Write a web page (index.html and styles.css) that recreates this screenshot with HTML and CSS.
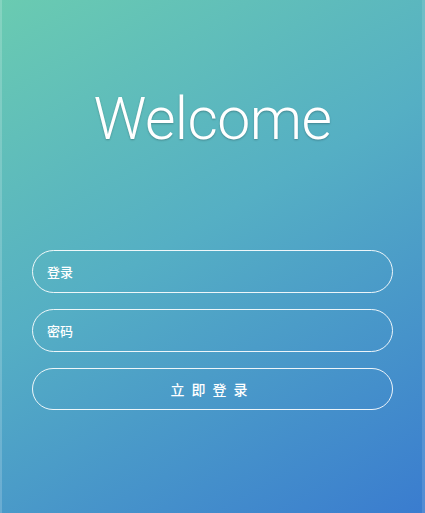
FILE: index.html
```html
<!DOCTYPE html>
<html lang="zh">
<head>
<meta charset="utf-8">
<title>Welcome</title>
<link rel="stylesheet" href="styles.css">
</head>
<body>
<main class="screen">
  <h1 class="title">Welcome</h1>
  <form class="form">
    <label class="field"><input class="input" type="text" placeholder="登录"></label>
    <label class="field"><input class="input" type="password" placeholder="密码"></label>
    <button class="submit" type="button">立即登录</button>
  </form>
</main>
</body>
</html>
```
FILE: styles.css
```css
* { box-sizing: border-box; }
html, body { margin: 0; height: 100%; }
body {
  font-family: "Noto Sans CJK SC", "Noto Sans", sans-serif;
}
.screen {
  height: 513px;
  background: linear-gradient(150deg, #6acbb1 0%, #55afc4 45%, #3a7ccf 100%);
  box-shadow: inset 2px 0 0 rgba(255,255,255,0.18), inset -3px 0 0 rgba(255,255,255,0.12);
  display: flex;
  flex-direction: column;
  align-items: center;
  padding: 84px 32px 0 32px;
}
.title {
  margin: 0;
  font-family: Roboto, "Liberation Sans", sans-serif;
  font-weight: 300;
  font-size: 59px;
  line-height: 70px;
  color: #fff;
  letter-spacing: -0.6px;
  text-shadow: 0 1px 2px rgba(0,0,0,0.25);
}
.form {
  margin-top: 96px;
  width: 361px;
  display: flex;
  flex-direction: column;
  gap: 16px;
}
.field { display: block; }
.input {
  width: 100%;
  height: 43px;
  border: 1px solid rgba(255,255,255,0.9);
  border-radius: 22px;
  background: transparent;
  padding: 0 14px;
  font-family: "Noto Sans CJK SC", sans-serif;
  font-weight: 500;
  font-size: 13px;
  color: #fff;
  outline: none;
}
.input::placeholder { color: #fff; }
.submit {
  height: 42px;
  border: 1px solid rgba(255,255,255,0.9);
  border-radius: 21px;
  background: transparent;
  color: #fff;
  font-family: "Noto Sans CJK SC", sans-serif;
  font-weight: 500;
  font-size: 14px;
  letter-spacing: 7px;
  cursor: pointer;
}
```
